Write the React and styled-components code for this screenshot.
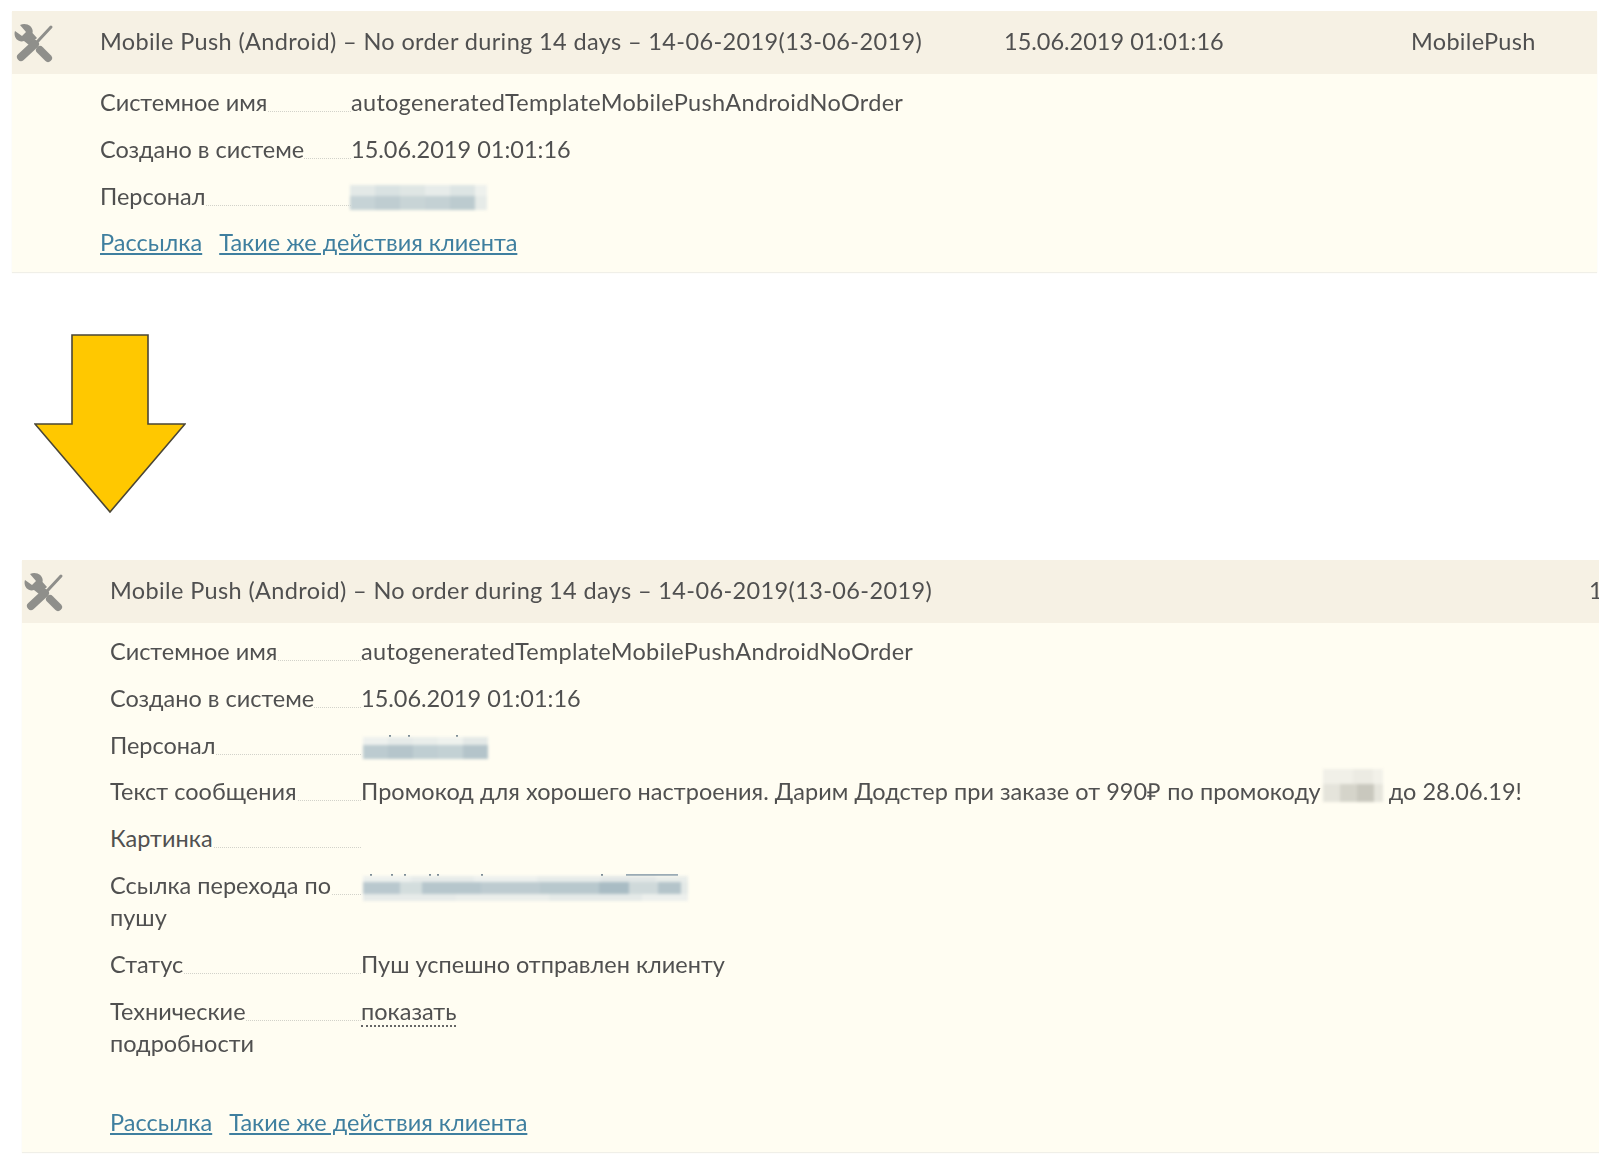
import React from 'react';
import styled, { createGlobalStyle } from 'styled-components';

const GlobalStyle = createGlobalStyle`
  html, body {
    margin: 0;
    padding: 0;
    background: #fff;
    overflow: hidden;
  }
  body {
    width: 1599px;
    height: 1156px;
    font-family: "Lato", "Liberation Sans", sans-serif;
    color: #505050;
  }
`;

const Page = styled.div`
  width: 1599px;
  height: 1156px;
  overflow: hidden;
  padding-top: 11px;
  box-sizing: border-box;
  filter: blur(0.5px);
`;

const Card = styled.section`
  box-sizing: border-box;
  margin-left: ${p => p.$left}px;
  width: ${p => p.$width}px;
  height: ${p => p.$height}px;
  background: #fffdf2;
  box-shadow: 0 1px 1px #f0efe8;
`;

const CardHeader = styled.header`
  height: 63px;
  box-sizing: border-box;
  padding-bottom: 3px;
  background: #f6f1e4;
  display: flex;
  align-items: center;
`;

const IconSlot = styled.div`
  width: 88px;
  flex: none;
  padding: 3px 0 0 2px;
  box-sizing: border-box;
  display: flex;
`;

const Title = styled.div`
  width: ${p => p.$width}px;
  flex: none;
  font-size: 23.5px;
  letter-spacing: 0.37px;
  white-space: nowrap;
`;

const Stamp = styled.div`
  width: 407px;
  flex: none;
  font-size: 23.5px;
  white-space: nowrap;
`;

const Channel = styled.div`
  font-size: 23.5px;
  letter-spacing: 0.3px;
`;

const CardBody = styled.div`
  padding: 12px 0 0 88px;
`;

const Row = styled.div`
  position: relative;
  display: grid;
  grid-template-columns: 251px 1fr;
  font-size: 23.5px;
  line-height: 32px;
  margin-bottom: 14.8px;

  &::before {
    content: '';
    position: absolute;
    left: 0;
    top: 25px;
    width: 251px;
    border-bottom: 1px dotted #d2d2ca;
  }
`;

const Label = styled.div`
  position: relative;
  width: 240px;
`;

const LabelText = styled.span`
  background: #fffdf2;
`;

const Value = styled.div`
  position: relative;
  white-space: nowrap;
  letter-spacing: ${p => p.$spacing || 0}px;
`;

const Links = styled.div`
  display: flex;
  gap: 17px;
  font-size: 23.5px;
  line-height: 32px;
  margin-top: ${p => p.$top || 0}px;
`;

const ClientLink = styled.a`
  color: #3f7f9f;
  text-decoration: underline;
`;

const Toggle = styled.span`
  display: inline-block;
  line-height: 28px;
  border-bottom: 2px dotted #666;
`;

const ArrowWrap = styled.div`
  padding: 62px 0 46px 34px;
  display: flex;
`;

// pixelated patch that hides personal data in the screenshot
const Mosaic = styled.div`
  display: ${p => (p.$inline ? 'inline-flex' : 'flex')};
  flex-direction: column;
  width: ${p => p.$width}px;
  height: ${p => p.$height}px;
  margin: ${p => p.$margin};
  vertical-align: top;
  filter: blur(1.6px);
`;

const MosaicRow = styled.div`
  display: flex;
  flex: ${p => p.$weight};
`;

const MosaicCell = styled.div`
  flex: ${p => p.$size};
  background: ${p => p.$color};
`;

// tops of the hidden letters that stick out above a patch
const Tick = styled.i`
  position: absolute;
  left: ${p => p.$x}px;
  top: ${p => p.$y}px;
  width: ${p => p.$w || 2}px;
  height: 2px;
  background: ${p => (p.$w ? '#8da0ac' : '#6d7d88')};
`;

const Patch = ({ rows, ...rest }) => (
  <Mosaic {...rest}>
    {rows.map((row, i) => (
      <MosaicRow key={i} $weight={row.weight}>
        {row.cells.map(([size, color], j) => (
          <MosaicCell key={j} $size={size} $color={color} />
        ))}
      </MosaicRow>
    ))}
  </Mosaic>
);

const staffRowsTop = [
  { weight: 11, cells: [[2, '#e3e9e7'], [2, '#d9e2e2'], [2, '#dfe6e4'], [2, '#e7ecea'], [2, '#dde5e4'], [1, '#eef1ed']] },
  { weight: 13, cells: [[2, '#c6d3d6'], [2, '#bfcdd1'], [2, '#c8d4d6'], [2, '#c4d1d4'], [2, '#bccbcf'], [1, '#e6ebe8']] },
];

const staffRowsBottom = [
  { weight: 8, cells: [[2, '#eef1ee'], [2, '#e6ebe9'], [2, '#eaeeeb'], [2, '#eff2ee'], [2, '#e4e9e7']] },
  { weight: 14, cells: [[2, '#bccbd0'], [2, '#b5c5cb'], [2, '#bfced2'], [2, '#c3d1d4'], [2, '#b4c4ca']] },
];

const linkRows = [
  { weight: 6, cells: [[6, '#eef1ee'], [8, '#e8ecea'], [8, '#eef1ee'], [8, '#e8ecea'], [7, '#e2e7e6'], [4, '#e9edea']] },
  { weight: 12, cells: [[5, '#b9c8ce'], [3, '#d3dddd'], [8, '#b6c6cc'], [8, '#bdcbd0'], [8, '#b8c8cd'], [4, '#a9bcc4'], [4, '#cfd9da'], [3, '#b4c4ca'], [1, '#e4e9e7']] },
  { weight: 7, cells: [[12, '#e7ebe9'], [12, '#ebeeeb'], [12, '#e5eae8'], [6, '#edf0ed']] },
];

const promoRows = [
  { weight: 15, cells: [[3, '#f1f0e8'], [2, '#ecebe3'], [1, '#f2f1e9']] },
  { weight: 18, cells: [[2, '#e5e4db'], [2, '#d5d4ca'], [2, '#c9c8be'], [1, '#e6e5dc']] },
];

const staffTicks = [28, 47, 95];
const linkTicks = [9, 30, 43, 68, 76, 120, 240];

const Wrench = () => (
  <svg width="40" height="40" viewBox="0 0 40 40">
    <path
      d="M1 8 L8 13 L12 9 L6 2 C13 -1 20 4 18.5 10 L23 15 L15 22 L10 18 C4 20 -1 14 1 8 Z"
      fill="#8f8f8b"
    />
    <path d="M37 4 L24 18" stroke="#8f8f8b" strokeWidth="3" strokeLinecap="round" />
    <path d="M21 21 L7 34" stroke="#8f8f8b" strokeWidth="8" strokeLinecap="round" />
    <path d="M26 27 L34 35" stroke="#8f8f8b" strokeWidth="8" strokeLinecap="round" />
  </svg>
);

const DownArrow = () => (
  <svg width="152" height="180" viewBox="0 0 152 180">
    <path d="M38 1 H114 V90 H151 L76 178 L1 90 H38 Z" fill="#ffc800" stroke="#4a4636" strokeWidth="1.6" />
  </svg>
);

const title = 'Mobile Push (Android) – No order during 14 days – 14-06-2019(13-06-2019)';

const Field = ({ label, spacing, children }) => (
  <Row>
    <Label><LabelText>{label}</LabelText></Label>
    <Value $spacing={spacing}>{children}</Value>
  </Row>
);

const ActionLinks = ({ top }) => (
  <Links $top={top}>
    <ClientLink>Рассылка</ClientLink>
    <ClientLink>Такие же действия клиента</ClientLink>
  </Links>
);

function App() {
  return (
    <Page>
      <GlobalStyle />
      <Card $left={12} $width={1585} $height={261}>
        <CardHeader>
          <IconSlot><Wrench /></IconSlot>
          <Title $width={904}>{title}</Title>
          <Stamp>15.06.2019 01:01:16</Stamp>
          <Channel>MobilePush</Channel>
        </CardHeader>
        <CardBody>
          <Field label="Системное имя" spacing={0.3}>autogeneratedTemplateMobilePushAndroidNoOrder</Field>
          <Field label="Создано в системе">15.06.2019 01:01:16</Field>
          <Field label="Персонал">
            <Patch rows={staffRowsTop} $width={137} $height={25} $margin="5px 0 -10px -1px" />
          </Field>
          <ActionLinks />
        </CardBody>
      </Card>

      <ArrowWrap><DownArrow /></ArrowWrap>

      <Card $left={22} $width={1640} $height={592}>
        <CardHeader>
          <IconSlot><Wrench /></IconSlot>
          <Title $width={1479}>{title}</Title>
          <Stamp>15.06.2019 01:01:16</Stamp>
        </CardHeader>
        <CardBody>
          <Field label="Системное имя" spacing={0.3}>autogeneratedTemplateMobilePushAndroidNoOrder</Field>
          <Field label="Создано в системе">15.06.2019 01:01:16</Field>
          <Field label="Персонал">
            {staffTicks.map(x => <Tick key={x} $x={x} $y={6} />)}
            <Patch rows={staffRowsBottom} $width={125} $height={22} $margin="8px 0 -10px 2px" />
          </Field>
          <Field label="Текст сообщения" spacing={0.04}>
            Промокод для хорошего настроения. Дарим Додстер при заказе от 990₽ по промокоду
            <Patch rows={promoRows} $inline $width={60} $height={33} $margin="-6px 6px -6px 2px" />
            до 28.06.19!
          </Field>
          <Field label="Картинка" />
          <Field label="Ссылка перехода по пушу">
            {linkTicks.map(x => <Tick key={x} $x={x} $y={5} />)}
            <Tick $x={265} $y={5} $w={52} />
            <Patch rows={linkRows} $width={325} $height={25} $margin="7px 0 -10px 2px" />
          </Field>
          <Field label="Статус">Пуш успешно отправлен клиенту</Field>
          <Field label="Технические подробности"><Toggle>показать</Toggle></Field>
          <ActionLinks top={47} />
        </CardBody>
      </Card>
    </Page>
  );
}

export default App;
